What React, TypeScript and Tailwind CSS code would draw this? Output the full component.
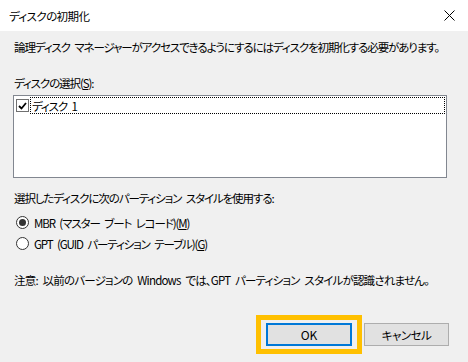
import React from "react";

const font = "[font-family:'Noto_Sans_CJK_JP','Noto_Sans',sans-serif] [font-feature-settings:'palt']";

function Radio({ checked }: { checked: boolean }) {
  return (
    <span className="w-[13px] h-[13px] rounded-full border border-[#333333] bg-white flex items-center justify-center shrink-0">
      {checked && <span className="w-[7px] h-[7px] rounded-full bg-[#333333]" />}
    </span>
  );
}

export default function App() {
  return (
    <div className={`w-[468px] h-[362px] bg-[#f0f0f0] flex text-black text-[11.5px] tracking-[-1.1px] [word-spacing:3px] leading-[16px] ${font}`}>
      <div className="w-[466px] flex flex-col">
        <div className="h-[31px] bg-white flex items-center justify-between pl-[9px] pr-[10px] shrink-0">
          <span className="tracking-[-0.6px]">ディスクの初期化</span>
          <svg width="11" height="11" viewBox="0 0 11 11" className="mr-[1px]">
            <path d="M0.5 0.5 L10.5 10.5 M10.5 0.5 L0.5 10.5" stroke="#000" strokeWidth="1" />
          </svg>
        </div>
        <div className="flex flex-col pl-[14px] pr-[17px]">
          <div className="mt-[8px] whitespace-nowrap">論理ディスク マネージャーがアクセスできるようにするにはディスクを初期化する必要があります。</div>
          <div className="mt-[20px]">ディスクの選択(<span className="underline">S</span>):</div>
          <div className="mt-[4px] -ml-[1px] w-[434px] h-[83px] bg-white border border-[#828790] p-[1px]">
            <div className="flex items-center h-[17px]">
              <span className="w-[13px] h-[13px] border border-[#707070] bg-white flex items-center justify-center ml-[1px] shrink-0">
                <svg width="9" height="8" viewBox="0 0 9 8">
                  <path d="M1 4 L3.5 6.5 L8 1" stroke="#000" strokeWidth="1.8" fill="none" />
                </svg>
              </span>
              <div className="ml-[1px] flex-1 h-[17px] border border-dotted border-black flex items-center pl-[1px]">
                ディスク 1
              </div>
            </div>
          </div>
          <div className="mt-[12px] whitespace-nowrap">選択したディスクに次のパーティション スタイルを使用する:</div>
          <div className="mt-[6px] h-[21px] flex items-center pl-[2px] gap-[5px]">
            <Radio checked />
            <span className="whitespace-nowrap">MBR (マスター ブート レコード)(<span className="underline">M</span>)</span>
          </div>
          <div className="h-[21px] flex items-center pl-[2px] gap-[5px]">
            <Radio checked={false} />
            <span className="whitespace-nowrap">GPT (GUID パーティション テーブル)(<span className="underline">G</span>)</span>
          </div>
          <div className="mt-[18px] whitespace-nowrap tracking-[-0.8px]">注意: 以前のバージョンの Windows では、GPT パーティション スタイルが認識されません。</div>
          <div className="mt-[27px] flex justify-end items-start">
            <div className="border-[5px] border-[#ffc000] px-[5px] py-[3px]">
              <button className="w-[86px] h-[23px] bg-[#e1e1e1] border-2 border-[#0078d7] flex items-center justify-center text-[12px] tracking-normal">OK</button>
            </div>
            <button className="ml-[2px] mt-[8px] w-[85px] h-[23px] bg-[#e1e1e1] border border-[#adadad] flex items-center justify-center tracking-[-0.5px]">キャンセル</button>
          </div>
        </div>
      </div>
      <div className="w-[2px] flex flex-col">
        <div className="h-[31px] bg-white" />
        <div className="flex-1 bg-[#f0f0f0]" />
      </div>
    </div>
  );
}
